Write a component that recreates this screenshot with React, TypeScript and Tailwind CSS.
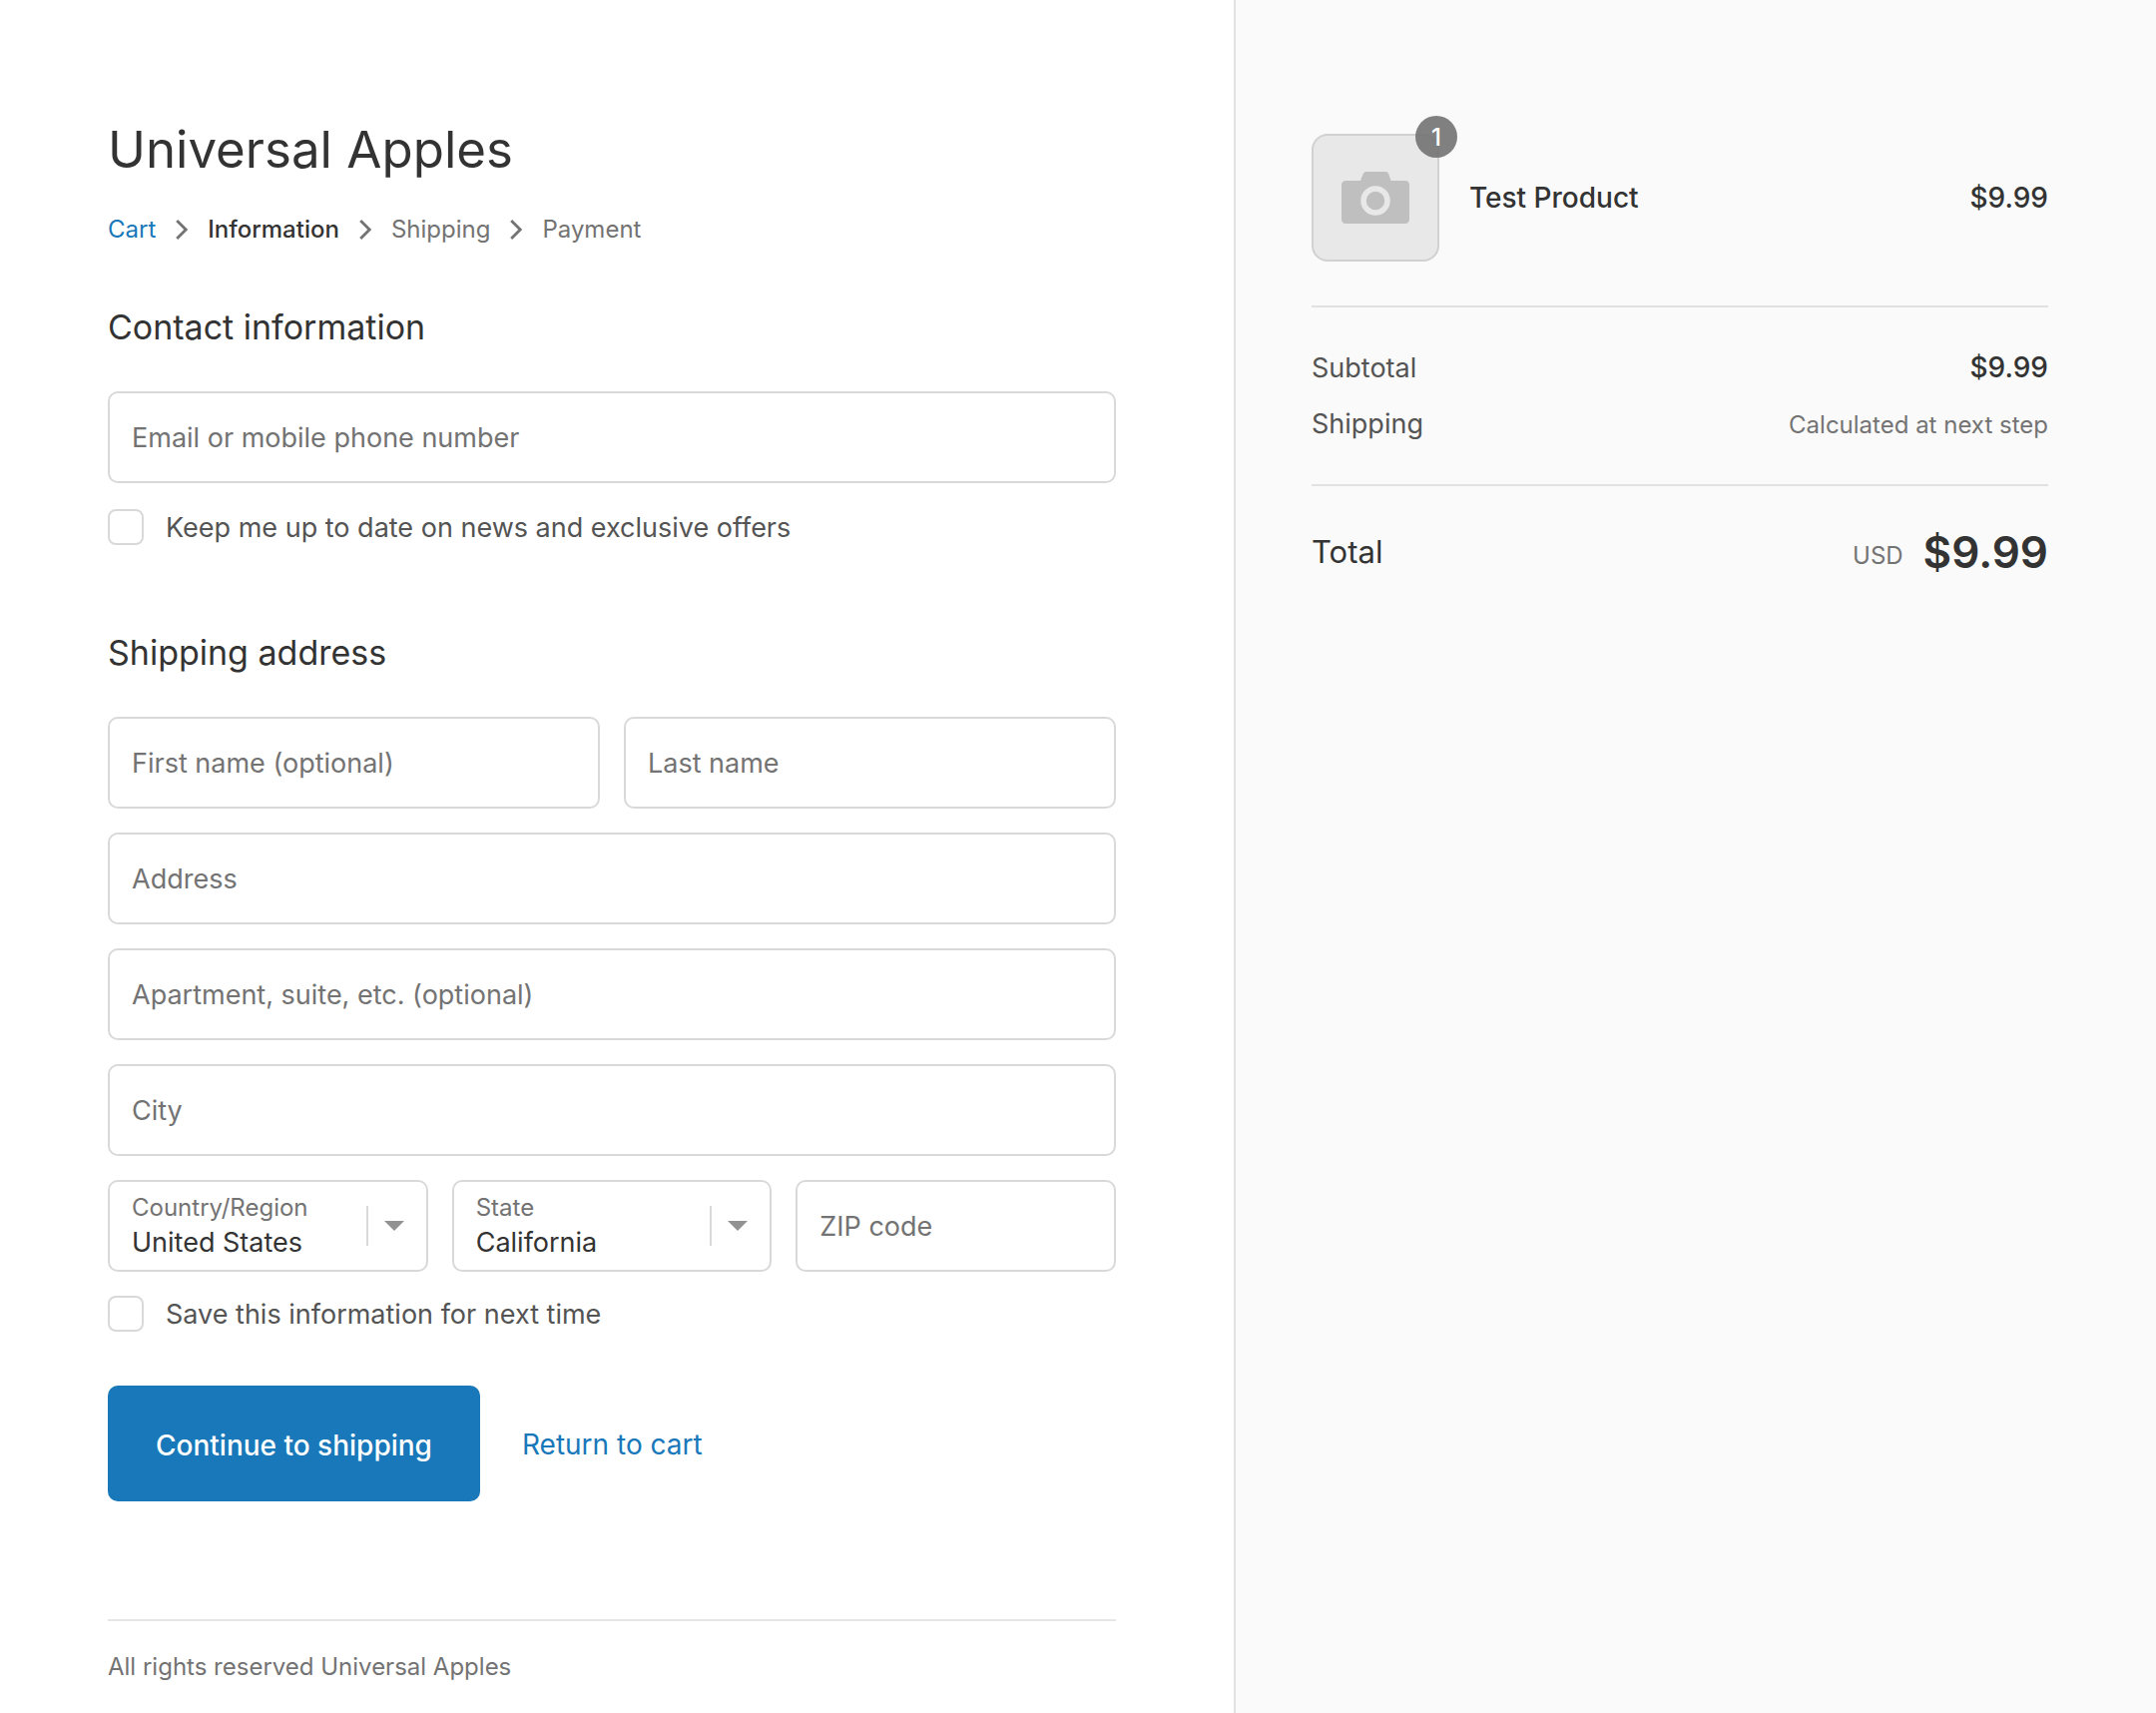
import type { InputHTMLAttributes } from 'react';

const steps = [
  { name: 'Cart', state: 'done' },
  { name: 'Information', state: 'current' },
  { name: 'Shipping', state: 'next' },
  { name: 'Payment', state: 'next' },
];

function Chevron() {
  return (
    <svg className="mx-5 h-5 w-3 text-[#737373]" viewBox="0 0 12 20" fill="none" aria-hidden="true">
      <path d="M1.2 1 10.2 10l-9 9" stroke="currentColor" strokeWidth="2.800" />
    </svg>
  );
}

function Breadcrumb() {
  return (
    <nav aria-label="Breadcrumb" className="mt-6">
      <ol className="flex items-center text-[24px] leading-9 text-[#737373]">
        {steps.map((step, i) => (
          <li key={step.name} className="flex items-center">
            {i > 0 && <Chevron />}
            {step.state === 'done' && <a href="#cart" className="text-[#1878b9]">{step.name}</a>}
            {step.state === 'current' && <span aria-current="step" className="font-medium text-[#333333]">{step.name}</span>}
            {step.state === 'next' && <span>{step.name}</span>}
          </li>
        ))}
      </ol>
    </nav>
  );
}

type TextFieldProps = InputHTMLAttributes<HTMLInputElement> & { id: string; label: string };

function TextField({ id, label, ...rest }: TextFieldProps) {
  return (
    <div className="relative min-w-0 flex-1">
      <input
        id={id}
        placeholder=" "
        className="peer block h-23 w-full rounded-[10px] border-2 border-[#d9d9d9] bg-white px-[22px] text-[27px] text-[#333333]"
        {...rest}
      />
      {/* label stands in for the placeholder until something is typed */}
      <label
        htmlFor={id}
        className="pointer-events-none absolute inset-y-0 left-6 flex items-center pt-0.5 text-[27px] text-[#737373] peer-[:not(:placeholder-shown)]:hidden"
      >
        {label}
      </label>
    </div>
  );
}

function SelectField({ id, label, options }: { id: string; label: string; options: string[] }) {
  return (
    <div className="relative min-w-0 flex-1">
      {/* floating label and arrow sit on top of the native select */}
      <label htmlFor={id} className="pointer-events-none absolute top-3 left-6 text-[24px] leading-8 text-[#737373]">
        {label}
      </label>
      <select
        id={id}
        className="block h-23 w-full appearance-none rounded-[10px] border-2 border-[#d9d9d9] bg-transparent pt-[34px] pr-16 pl-[22px] text-[27px] text-[#333333]"
      >
        {options.map((option) => (
          <option key={option}>{option}</option>
        ))}
      </select>
      <div className="pointer-events-none absolute inset-y-0 right-6 flex items-center gap-4">
        <span className="h-10 w-0.5 bg-[#d9d9d9]" />
        <svg className="h-2.5 w-5" viewBox="0 0 20 10" aria-hidden="true">
          <path d="M0 0h20L10 10z" fill="#919191" />
        </svg>
      </div>
    </div>
  );
}

function Checkbox({ id, label }: { id: string; label: string }) {
  return (
    <div className="flex items-center gap-[22px]">
      <input
        id={id}
        type="checkbox"
        className="size-9 shrink-0 appearance-none rounded-lg border-2 border-[#d9d9d9] bg-white checked:bg-[#1878b9]"
      />
      <label htmlFor={id} className="pt-0.5 text-[27px] leading-8 text-[#545454]">{label}</label>
    </div>
  );
}

function CameraIcon() {
  return (
    <svg className="h-[52px] w-[68px]" viewBox="0 0 68 52" aria-hidden="true">
      <path
        d="M4 9h15l2.500-6.500C22.300.800 23.500 0 25 0h19c1.500 0 2.700.800 3.300 2.500L49.500 9H64c2.200 0 4 1.800 4 4v35c0 2.200-1.800 4-4 4H4c-2.200 0-4-1.800-4-4V13c0-2.200 1.800-4 4-4z"
        fill="#bfbfbf"
      />
      <circle cx="34" cy="29" r="12" fill="none" stroke="#e8e8e8" strokeWidth="5.500" />
    </svg>
  );
}

function OrderSummary() {
  return (
    <aside className="border-l-2 border-[#e1e1e1] bg-[#fafafa] pt-[134px] pr-27 pl-19">
      <div className="flex items-center border-b-2 border-[#e1e1e1] pb-11 text-[28px] leading-10 font-medium text-[#333333]">
        <div className="relative flex size-32 shrink-0 items-center justify-center rounded-2xl border-2 border-[#d1d1d1] bg-[#e8e8e8]">
          <CameraIcon />
          <span className="absolute -top-5 -right-5 flex size-[42px] items-center justify-center rounded-full bg-[#727272]/90 pt-0.5 text-[24px] leading-9 text-white">
            1
          </span>
        </div>
        <h2 className="ml-[30px] flex-1">Test Product</h2>
        <p>$9.99</p>
      </div>

      <dl className="flex flex-col gap-4 border-b-2 border-[#e1e1e1] py-10 text-[27px] leading-10">
        <div className="flex items-baseline justify-between">
          <dt className="text-[#545454]">Subtotal</dt>
          <dd className="text-[28px] font-medium text-[#333333]">$9.99</dd>
        </div>
        <div className="flex items-baseline justify-between">
          <dt className="text-[#545454]">Shipping</dt>
          <dd className="text-[24px] leading-9 text-[#737373]">Calculated at next step</dd>
        </div>
      </dl>

      <dl className="flex items-center justify-between pt-[38px] text-[#333333]">
        <dt className="text-[31px] leading-14">Total</dt>
        <dd className="flex items-center gap-5">
          <span className="mt-2 text-[24px] leading-9 text-[#737373]">USD</span>
          <span className="text-[44px] leading-14 font-semibold">$9.99</span>
        </dd>
      </dl>
    </aside>
  );
}

function App() {
  return (
    <div className="grid min-h-screen grid-cols-[1236fr_924fr] bg-white font-['Inter',sans-serif]">
      <main className="pt-28 pr-[118px] pb-7 pl-27">
        <h1 className="text-[51px] leading-19 text-[#333333]">Universal Apples</h1>
        <Breadcrumb />

        <form>
          {/* Contact */}
          <section className="mt-14">
            <h2 className="mb-10 text-[34px] leading-12 text-[#333333]">Contact information</h2>
            <div className="flex flex-col gap-[26px]">
              <TextField id="email" label="Email or mobile phone number" autoComplete="email" />
              <Checkbox id="news" label="Keep me up to date on news and exclusive offers" />
            </div>
          </section>

          {/* Shipping */}
          <section className="mt-21">
            <h2 className="mb-10 text-[34px] leading-12 text-[#333333]">Shipping address</h2>
            <div className="flex flex-col gap-6">
              <div className="flex gap-6">
                <TextField id="first-name" label="First name (optional)" />
                <TextField id="last-name" label="Last name" />
              </div>
              <TextField id="address" label="Address" />
              <TextField id="apartment" label="Apartment, suite, etc. (optional)" />
              <TextField id="city" label="City" />
              <div className="flex gap-6">
                <SelectField id="country" label="Country/Region" options={['United States', 'Canada']} />
                <SelectField id="state" label="State" options={['California', 'New York', 'Texas']} />
                <TextField id="zip" label="ZIP code" inputMode="numeric" />
              </div>
              <Checkbox id="remember" label="Save this information for next time" />
            </div>
          </section>

          <div className="mt-[54px] flex items-center gap-[42px] text-[28px]">
            <button type="submit" className="h-29 rounded-[10px] bg-[#1878b9] px-12 pt-1 font-medium text-white">
              Continue to shipping
            </button>
            <a href="#cart" className="pt-0.5 text-[#1878b9]">Return to cart</a>
          </div>
        </form>

        <footer className="mt-[118px] border-t-2 border-[#e6e6e6] pt-7 text-[24px] leading-9 text-[#737373]">
          All rights reserved Universal Apples
        </footer>
      </main>

      <OrderSummary />
    </div>
  );
}

export default App;
